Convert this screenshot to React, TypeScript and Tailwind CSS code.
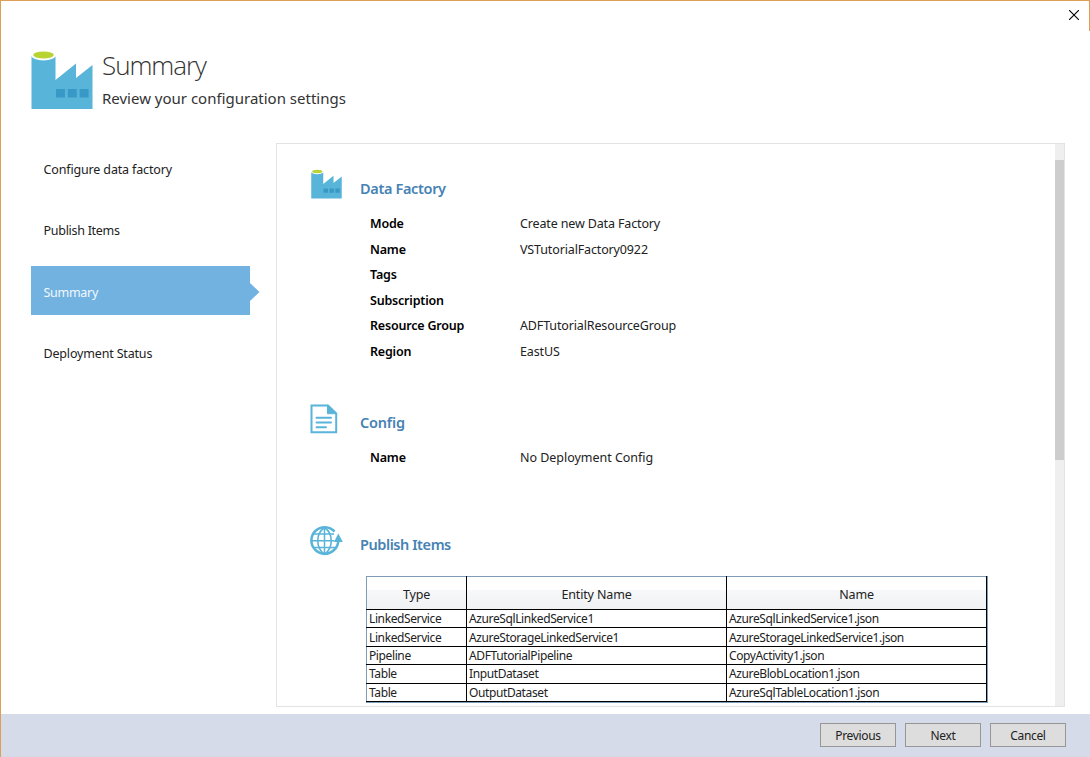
import React from "react";

function FactoryIcon({ className }: { className: string }) {
  return (
    <svg className={className} viewBox="0 0 62 58" aria-hidden="true">
      <path d="M0.500 5.500H24.500V29L45 12.500V27L61.500 14V58H0.500Z" fill="#59b4d9" />
      <ellipse cx="12.5" cy="4.500" rx="12" ry="4.900" fill="#fff" />
      <ellipse cx="12.5" cy="4" rx="10.3" ry="3.400" fill="#b8d432" />
      <path d="M25 38H34V46.500H25ZM36.800 38H45.800V46.500H36.800ZM48.600 38H57.600V46.500H48.600Z" fill="#3999c6" />
    </svg>
  );
}

function DocumentIcon() {
  return (
    <svg className="h-[30px] w-7" viewBox="0 0 28 30" fill="none" stroke="#59b4d9" aria-hidden="true">
      <path d="M1.500 1.500H18L26.200 9.400V28.300H1.500Z" strokeWidth="2" />
      <path d="M17.500 1V9.700H26.500Z" fill="#59b4d9" strokeWidth="1" />
      <path d="M6.500 13.700H21M6.500 18.500H21M6.500 23.300H16" strokeWidth="1.900" strokeLinecap="round" />
    </svg>
  );
}

function GlobeIcon() {
  return (
    <svg className="mt-px h-[30px] w-8 overflow-visible" viewBox="0 0 32 30" fill="none" stroke="#59b4d9" aria-hidden="true">
      <path d="M24.500 5.500A13.300 13.300 0 1 0 24 24C27 21.500 28.300 18.500 28.300 14" strokeWidth="2.600" />
      <path d="M14.500 1V29M1 14.700H24.500M3.500 8H24M3.500 21.500H25" strokeWidth="1.500" />
      <path d="M14.500 1.500C5.500 8 5.500 21 14.500 28.500C23.500 21 23.500 8 14.500 1.500Z" strokeWidth="1.600" />
      <path d="M28.300 7.500L32.800 16H24Z" fill="#59b4d9" stroke="none" />
    </svg>
  );
}

type Step = { text: string; tracking: string; active?: boolean };

const steps: Step[] = [
  { text: "Configure data factory", tracking: "tracking-[-0.15px]" },
  { text: "Publish Items", tracking: "tracking-[-0.28px]" },
  { text: "Summary", tracking: "tracking-[-0.28px]", active: true },
  { text: "Deployment Status", tracking: "tracking-[-0.17px]" },
];

const settings: [string, string][] = [
  ["Mode", "Create new Data Factory"],
  ["Name", "VSTutorialFactory0922"],
  ["Tags", ""],
  ["Subscription", ""],
  ["Resource Group", "ADFTutorialResourceGroup"],
  ["Region", "EastUS"],
];

const entities = [
  ["LinkedService", "AzureSqlLinkedService1", "AzureSqlLinkedService1.json"],
  ["LinkedService", "AzureStorageLinkedService1", "AzureStorageLinkedService1.json"],
  ["Pipeline", "ADFTutorialPipeline", "CopyActivity1.json"],
  ["Table", "InputDataset", "AzureBlobLocation1.json"],
  ["Table", "OutputDataset", "AzureSqlTableLocation1.json"],
];

function SettingRow({ label, value, tracking }: { label: string; value: string; tracking: string }) {
  return (
    <div className="flex h-[25.6px] items-center pl-[93px]">
      <span className="w-[150px] font-semibold tracking-[-0.2px] text-black">{label}</span>
      <span className={tracking}>{value}</span>
    </div>
  );
}

function SectionTitle({ icon, className, children }: { icon: React.ReactNode; className: string; children: React.ReactNode }) {
  return (
    <div className="flex h-10 items-start pl-[33px]">
      <div className="w-[50px] shrink-0">{icon}</div>
      <h2 className={`text-[14.500px] leading-5 font-semibold text-[#4682b4] ${className}`}>{children}</h2>
    </div>
  );
}

export default function App() {
  return (
    <div className="relative flex h-[757px] w-[1090px] flex-col overflow-hidden border-t border-l border-[#dc9f55] bg-white font-['Noto_Sans','Open_Sans',sans-serif] text-[12.500px] text-[#222]">
      <div className="absolute top-0 right-0 h-[30px] w-px bg-[#dc9f55]" />
      <button aria-label="Close" className="absolute top-[9px] right-[11px]">
        <svg className="size-[10px]" viewBox="0 0 10 10" stroke="#000" strokeWidth="1.100">
          <path d="M0 0L10 10M10 0L0 10" />
        </svg>
      </button>

      <header className="flex h-[142px] shrink-0 pt-[50px] pl-[30px]">
        <FactoryIcon className="h-[58px] w-[62px]" />
        <div className="pl-[9px]">
          <h1 className="h-[34px] font-['Open_Sans','Noto_Sans',sans-serif] text-[26px] leading-[28px] font-light tracking-[-1.050px] text-[#333]">Summary</h1>
          <p className="text-[15px] leading-[27px] text-[#333]">Review your configuration settings</p>
        </div>
      </header>

      <div className="flex h-[571px] shrink-0">
        <nav className="flex w-[275px] flex-col gap-[12.500px] pt-[0.400px] pl-[30px]">
          {steps.map((s) => (
            <div key={s.text} className={s.active ? "relative flex h-[49px] w-[219px] items-center bg-[#71b2e1] pt-1 pl-[12.500px] text-[#f2f8fd]" : "flex h-[49px] w-[219px] items-center pt-1 pl-[12.500px]"}>
              <span className={s.tracking}>{s.text}</span>
              {s.active && (
                <svg className="absolute top-[17px] left-full h-[18px] w-[10px]" viewBox="0 0 10 18">
                  <path d="M0 0L9.500 9L0 18Z" fill="#71b2e1" />
                </svg>
              )}
            </div>
          ))}
        </nav>

        <main className="flex h-[564px] w-[789px] border border-[#e3e3e3]">
          <div className="flex-1 pt-[25px]">
            <section className="h-[235px]">
              <SectionTitle className="pt-[9px] tracking-[-0.350px]" icon={<FactoryIcon className="ml-[1px] h-[30px] w-[31px]" />}>Data Factory</SectionTitle>
              <div className="pt-[2.500px]">
                {settings.map(([l, v]) => (
                  <SettingRow key={l} label={l} value={v} tracking="tracking-[-0.140px]" />
                ))}
              </div>
            </section>
            <section className="h-[121px]">
              <SectionTitle className="pt-[8px] tracking-[-0.200px]" icon={<DocumentIcon />}>Config</SectionTitle>
              <div className="pt-[2px]">
                <SettingRow label="Name" value="No Deployment Config" tracking="tracking-[-0.030px]" />
              </div>
            </section>
            <section>
              <SectionTitle className="pt-[9px] tracking-[-0.430px]" icon={<GlobeIcon />}>Publish Items</SectionTitle>
              <div className="mt-[11px] ml-[89px] w-[622px] border-r border-b border-[#7f9db9]">
                <table className="w-[621px] table-fixed border-collapse border border-black text-[12px]">
                  <colgroup>
                    <col className="w-[100px]" />
                    <col className="w-[260px]" />
                    <col className="w-[260px]" />
                  </colgroup>
                  <thead>
                    <tr className="h-[33px] bg-linear-to-b from-white from-40% via-[#f7f8f9] via-40% to-[#f0f1f3]">
                      {["Type", "Entity Name", "Name"].map((h) => (
                        <th key={h} className="border border-black border-t-[#7f9db9] p-0 pt-1 text-[12.500px] font-normal tracking-[-0.150px] first:border-l-[#7f9db9]">{h}</th>
                      ))}
                    </tr>
                  </thead>
                  <tbody>
                    {entities.map((r) => (
                      <tr key={r[2]} className="h-[18.400px]">
                        {r.map((c, i) => (
                          <td key={i} className="border border-black p-0 pt-px pl-0.5 leading-4 tracking-[-0.390px] whitespace-nowrap first:border-l-[#7f9db9]">{c}</td>
                        ))}
                      </tr>
                    ))}
                  </tbody>
                </table>
              </div>
            </section>
          </div>
          <div className="w-[9px] bg-[#efefef] pt-4">
            <div className="h-[300px] bg-[#cdcdcd]" />
          </div>
        </main>
      </div>

      <footer className="flex flex-1 items-start justify-end gap-[9px] bg-[#d6dbe9] pt-[9px] pr-6">
        {["Previous", "Next", "Cancel"].map((b) => (
          <button key={b} className="h-6 w-[76px] border border-[#969696] bg-[#dddddd] pt-px text-[12px] leading-5 tracking-[-0.350px]">{b}</button>
        ))}
      </footer>
    </div>
  );
}
